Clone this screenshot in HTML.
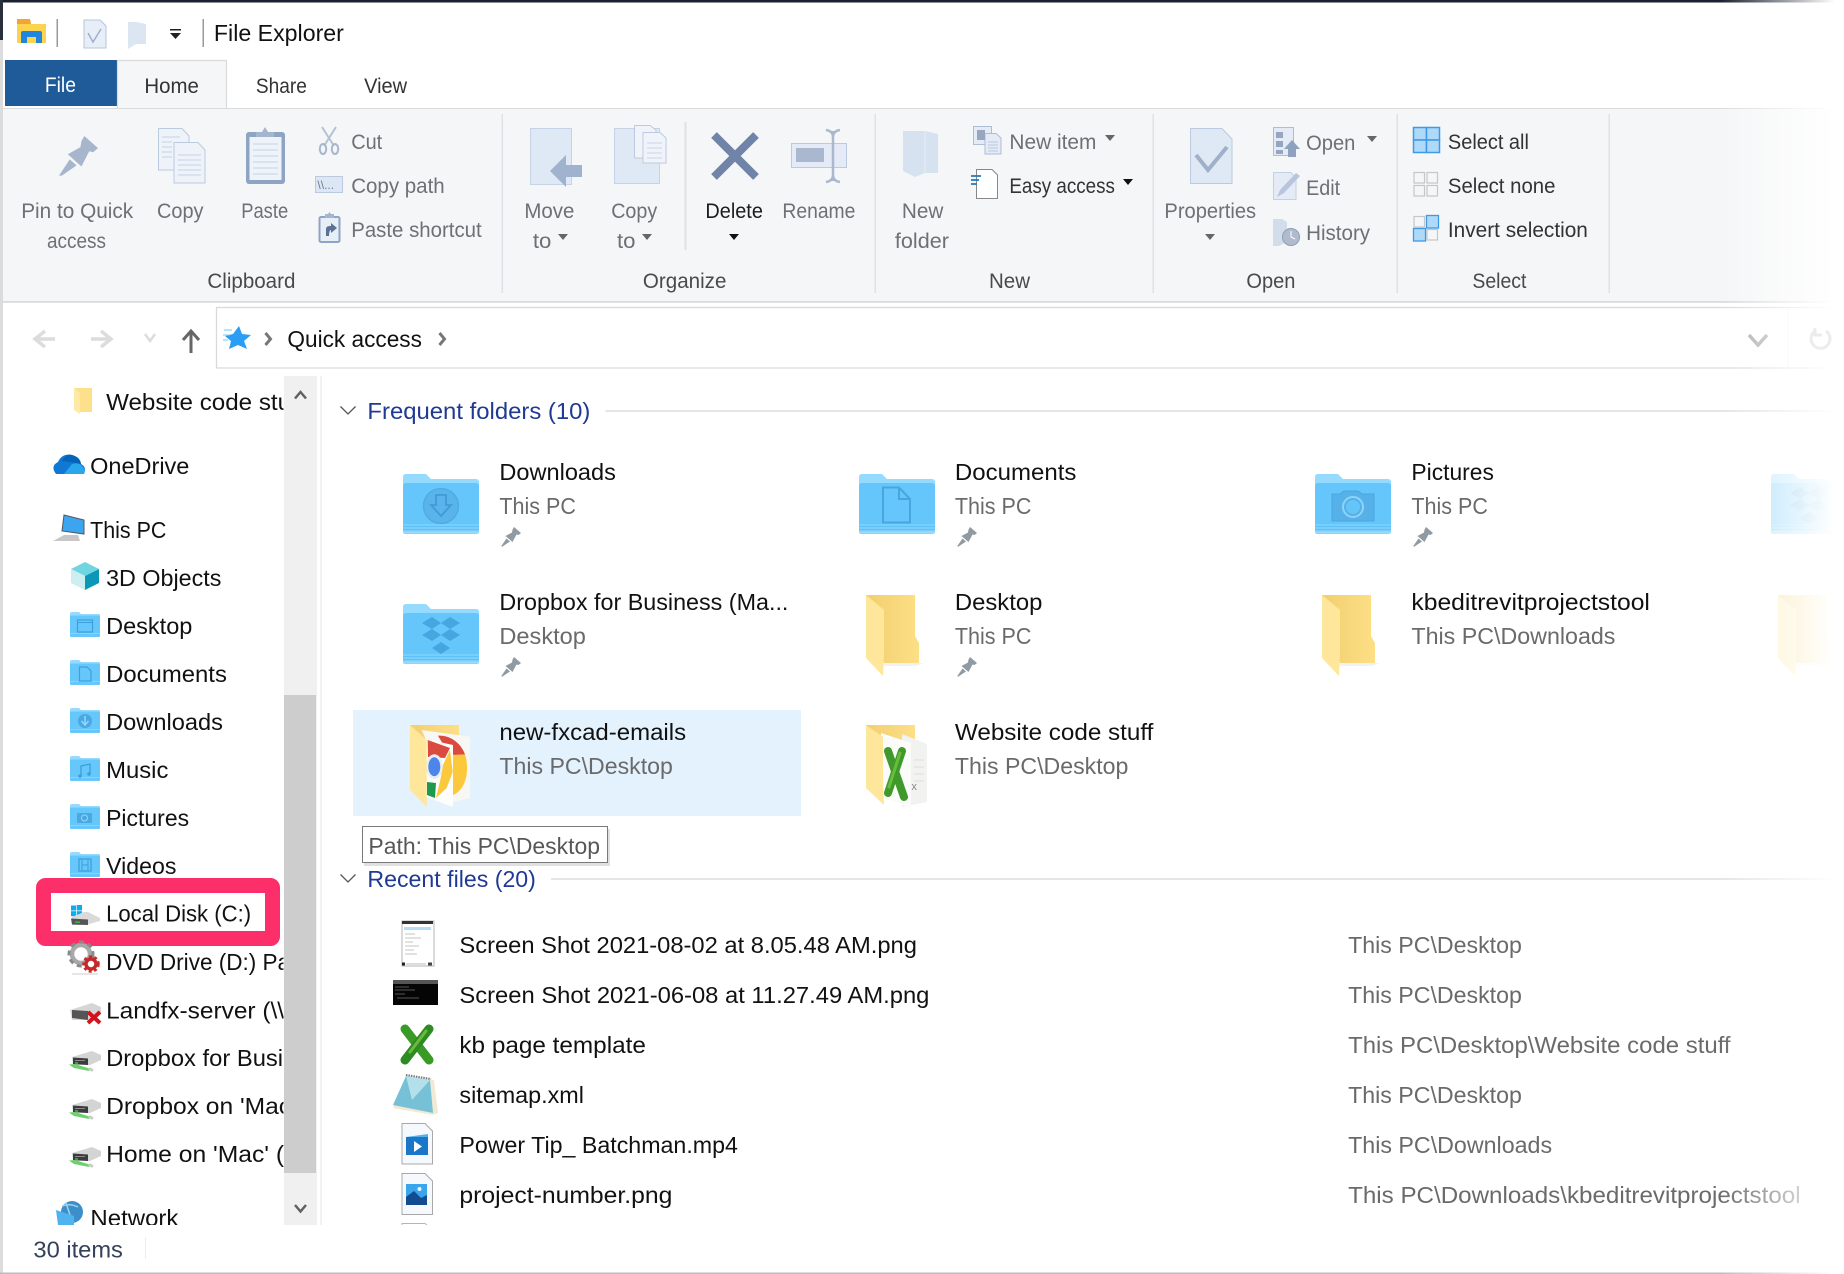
<!DOCTYPE html>
<html lang="en"><head><meta charset="utf-8"><title>File Explorer</title>
<style>
html,body{margin:0;padding:0;background:#fff;width:1844px;height:1274px;overflow:hidden}
svg{display:block;position:absolute;left:0;top:0}
text{font-family:"Liberation Sans",sans-serif;font-size:23.5px;fill:#111;transform:translateX(-.6px)}
.n text{transform:translate(-.6px,1px)}
.r{font-size:21px;fill:#6d7074}
.k{font-size:21px;fill:#1c1c1c}
.g{font-size:21px;fill:#4a4a4a}
.s{fill:#6a6a6a}
.h{fill:#1f3a93}
</style></head><body>
<svg width="1844" height="1274" viewBox="0 0 1844 1274" xmlns="http://www.w3.org/2000/svg">
<defs>
<linearGradient id="fade" x1="0" x2="1" y1="0" y2="0"><stop offset="0" stop-color="#fff" stop-opacity="0"/><stop offset="1" stop-color="#fff"/></linearGradient>
<linearGradient id="yb" x1="0" x2="1" y1="0" y2="0"><stop offset="0" stop-color="#f2cf70"/><stop offset="1" stop-color="#fddf86"/></linearGradient>
<clipPath id="nav"><rect x="0" y="376" width="283.5" height="849"/></clipPath>
<clipPath id="mainc"><rect x="330" y="376" width="1514" height="849"/></clipPath>
<g id="bf">
<path d="M3 0H23L28 5H73Q76 5 76 8V20H0V3Q0 0 3 0Z" fill="#95dbff"/>
<path d="M0 12Q0 9 3 9H73Q76 9 76 12V57Q76 60 73 60H3Q0 60 0 57Z" fill="#64c6fb"/>
<path d="M0 50H76V57Q76 60 73 60H3Q0 60 0 57Z" fill="#78cffc"/>
<path d="M0 52.500H76M0 55.500H76" stroke="#5fc0f5" stroke-width="1"/>
<path d="M0 58.500H76" stroke="#97dcfd" stroke-width="2"/>
</g>
<g id="yf">
<path d="M0 0H49V41L53 48V68H17Z" fill="url(#yb)"/>
<path d="M18 68H58L50 71H18Z" fill="#e9e9e9" opacity=".6"/>
<path d="M0 0L18 15V58L17 81L0 63Z" fill="#fee69a"/>
</g>
<g id="nf">
<path d="M1 0H9L11 2H29Q30 2 30 3V10H0V1Z" fill="#95dbff"/>
<path d="M0 4Q0 3.500 1 3.500H29Q30 3.500 30 4.500V24Q30 25 29 25H1Q0 25 0 24Z" fill="#66c7fb"/>
<path d="M0 21.500H30" stroke="#85d4fc" stroke-width="1"/>
</g>
<path id="pin" d="M13 0L20 6L17.500 8L15.500 7.500L11.500 15L4.500 9L11 5.500L11.500 2.500ZM5.500 11.500L9 14.500L1.500 19.500L0 19.500Z"/>
<g id="dn">
<path d="M3 6L23 0L32 4V9L21 14H4Z" fill="#d4d4d4"/>
<path d="M4 6.500L19 7.500V14L4 13Z" fill="#3c3c3c"/>
<path d="M6 9.500H16" stroke="#8a8a8a"/>
<path d="M6 12H9" stroke="#43b649" stroke-width="1.500"/>
<path d="M0 13.500L6 13L22 18L20 20L5 17Z" fill="#6fcf6f"/>
<path d="M20 17.500l4 2" stroke="#ccc" stroke-width="3"/>
</g>
</defs>

<rect width="1844" height="1274" fill="#fff"/>
<rect width="1844" height="2.500" fill="#1b2030"/>
<rect x="0" y="0" width="3" height="40" fill="#2a2f3c"/>
<rect x="0" y="40" width="3" height="1234" fill="#dcdcdc"/>

<!-- quick access bar -->
<path d="M17 19H30L31 24H46V43H17Z" fill="#fcd34f"/>
<path d="M17 19H30L31 24H17Z" fill="#efa632"/>
<path d="M21 43V33Q21 31 23 31H40Q42 31 42 33V43H36V37H27V43Z" fill="#1f86e0"/>
<rect x="56.500" y="19" width="1.500" height="28" fill="#9a9a9a"/>
<path d="M84 20H100L106 26V48H84Z" fill="#e8eef8" stroke="#b4c4dc" stroke-width="1"/>
<path d="M88 33L93 42L101 29" fill="none" stroke="#9fb0c9" stroke-width="1.500"/>
<path d="M128 22L136 22L146 24V44H136L128 49Z" fill="#dce6f3"/>
<rect x="170" y="29" width="11" height="1.500" fill="#222"/>
<path d="M170 33H181L175.500 39Z" fill="#222"/>
<rect x="202.500" y="19" width="1.500" height="28" fill="#9a9a9a"/>
<text x="214.500" y="41" textLength="130" lengthAdjust="spacingAndGlyphs">File Explorer</text>

<!-- tabs -->
<rect x="5" y="60" width="112" height="46" fill="#1f5b99"/>
<text x="45.500" y="92" class="k" style="fill:#fff" textLength="31" lengthAdjust="spacingAndGlyphs">File</text>
<rect x="0" y="108" width="1844" height="1.500" fill="#dadbdc"/>
<path d="M117.500 108V60.500H226.500V108" fill="#f5f6f7" stroke="#dadbdc" stroke-width="1.200"/>
<text x="145" y="93" class="k" style="fill:#333" textLength="54.500" lengthAdjust="spacingAndGlyphs">Home</text>
<text x="256.500" y="93" class="k" style="fill:#333" textLength="51" lengthAdjust="spacingAndGlyphs">Share</text>
<text x="364.700" y="93" class="k" style="fill:#333" textLength="43" lengthAdjust="spacingAndGlyphs">View</text>

<!-- ribbon -->
<rect x="3" y="109" width="1841" height="192" fill="#f5f6f7"/>
<rect x="3" y="301" width="1841" height="1.800" fill="#dadbdc"/>
<g fill="#dfe1e4">
<rect x="501.500" y="114" width="1.500" height="179"/><rect x="874.500" y="114" width="1.500" height="179"/>
<rect x="1152.500" y="114" width="1.500" height="179"/><rect x="1396.500" y="114" width="1.500" height="179"/>
<rect x="1608.500" y="114" width="1.500" height="179"/><rect x="684.500" y="122" width="2" height="128"/>
</g>

<!-- Ribbon icons -->
<use href="#pin" transform="translate(59 136) scale(1.950 2.030)" fill="#a8b6cd"/>
<g fill="#eef2f9" stroke="#bccadf">
<path d="M158.500 128.500H182L189 136V170H158.500Z"/>
<path d="M174 142.500H198L205 150V183H174Z"/>
</g>
<path d="M162 137H180M162 142H172M162 147H172M162 152H172M162 157H172M178 155H201M178 160H201M178 165H201M178 170H201M178 175H201" stroke="#c6d3e6" stroke-width="1"/>
<rect x="246" y="132" width="39" height="52" rx="3" fill="#8ea4c3"/>
<rect x="249.500" y="137" width="32" height="43" fill="#eef2f9"/>
<path d="M253 144H278M253 150H278M253 156H278M253 162H278M253 168H278M253 174H278" stroke="#c6d3e6"/>
<path d="M256 137V132H262L265 127L268 132H274V137Z" fill="#a4b6cf"/>
<path d="M322 127L334 146M336 127L324 146" stroke="#b5c2d6" stroke-width="2" fill="none"/>
<ellipse cx="323" cy="149" rx="3.200" ry="5" fill="none" stroke="#a7b6cd" stroke-width="2"/>
<ellipse cx="335" cy="149" rx="3.200" ry="5" fill="none" stroke="#a7b6cd" stroke-width="2"/>
<rect x="315.500" y="176.500" width="27" height="16" fill="#dce6f4" stroke="#bccadf"/>
<text x="318" y="189" style="font-size:12px;fill:#6e7f99">\\...</text>
<rect x="319.500" y="217" width="20" height="25" rx="1.500" fill="#e8eef7" stroke="#8ea4c3" stroke-width="2"/>
<path d="M325 218V214H328L329.500 212L331 214H334V218Z" fill="#a4b6cf"/>
<path d="M326 236V229Q326 226 330 226H331V223L337 228L331 233V230Q329 230 329 236Z" fill="#5a7194"/>

<rect x="530.500" y="128.500" width="41" height="56" fill="#dfe8f5" stroke="#c5d3e6"/>
<path d="M550 171L566 155V165H582V177H566V187Z" fill="#9fb2ce"/>
<rect x="614.500" y="128.500" width="45" height="55" fill="#dfe8f5" stroke="#c5d3e6"/>
<g fill="#f0f4fa" stroke="#bccadf"><path d="M634.500 125.500H650L656 130V158H634.500Z"/><path d="M643 132.500H660L666 138V163H643Z"/></g>
<path d="M647 143H662M647 148H662M647 153H662M647 158H662" stroke="#c6d3e6"/>

<path d="M714 135L756 177M756 135L714 177" stroke="#6f84a8" stroke-width="8"/>
<rect x="791.500" y="143.500" width="55" height="24" fill="#e4ebf6" stroke="#bccadf"/>
<rect x="796" y="148" width="28" height="14" fill="#a9b8cf"/>
<path d="M833 131V181M826 130Q833 131 833 137Q833 131 840 130M826 182Q833 181 833 175Q833 181 840 182" fill="none" stroke="#a9b8cf" stroke-width="2.500"/>

<path d="M903 131L925 131L938 134V173H925L915 177L903 171Z" fill="#d7e2f1"/>
<path d="M925 131V173" stroke="#e4ecf6"/>
<g fill="#e4ebf6" stroke="#adbdd6"><rect x="973.500" y="126.500" width="18" height="18"/><path d="M985 133.500H996L1001 138V154H985Z"/></g>
<rect x="977" y="130" width="8" height="10" fill="#97a7c0"/>
<path d="M988 142H998M988 145H998M988 148H998M988 151H998" stroke="#b9c8e0"/>
<path d="M976.500 169.500H992L997.500 175V198.500H976.500Z" fill="#fff" stroke="#888"/>
<path d="M971 176H981M971 180H979M971 184H977" stroke="#2a76b4" stroke-width="1.800"/>

<path d="M1190.500 128.500H1222L1232 139V183.500H1190.500Z" fill="#dfe8f5" stroke="#bccadf"/>
<path d="M1196 155L1208 170L1227 147" fill="none" stroke="#9fb0c9" stroke-width="4"/>
<rect x="1273.500" y="127.500" width="20" height="28" fill="#e4ebf6" stroke="#adbdd6"/>
<path d="M1276 132h7v6h-7zM1276 141h7v6h-7zM1276 150h7v4h-7z" fill="#95a6c0"/>
<path d="M1292 140L1300 149H1296V157H1288V149H1284Z" fill="#8ea2bf"/>
<path d="M1273.500 172.500H1291L1296 178V199.500H1273.500Z" fill="#e4ebf6" stroke="#c3d0e3"/>
<path d="M1277 197L1280 190L1296 173L1300 176L1284 193Z" fill="#b7c6dc"/>
<path d="M1273 219H1282L1287 222V242L1279 246H1273Z" fill="#d2ddec"/>
<circle cx="1291" cy="237" r="8.500" fill="#b0bccd" stroke="#8e9db3"/>
<path d="M1291 231V237L1295 239" stroke="#fff" fill="none"/>

<g fill="#aed9f9" stroke="#3d9ae8" stroke-width="1.500">
<rect x="1413.500" y="127.500" width="13" height="12.500"/><rect x="1426.500" y="127.500" width="13" height="12.500"/>
<rect x="1413.500" y="140" width="13" height="12.500"/><rect x="1426.500" y="140" width="13" height="12.500"/>
</g>
<g fill="#f5f6f7" stroke="#c6c6c6" stroke-width="1.200">
<rect x="1414" y="172.500" width="10.500" height="10.500"/><rect x="1427" y="172.500" width="10.500" height="10.500"/>
<rect x="1414" y="185.500" width="10.500" height="10.500"/><rect x="1427" y="185.500" width="10.500" height="10.500"/>
<rect x="1414" y="216.500" width="10.500" height="10.500"/><rect x="1427" y="229.500" width="10.500" height="10.500"/>
</g>
<g fill="#aed9f9" stroke="#3d9ae8" stroke-width="1.300">
<rect x="1426.500" y="215.500" width="12" height="12.500"/><rect x="1413.500" y="228.500" width="12" height="12.500"/>
</g>

<!-- Ribbon text -->
<text x="21.800" y="218" class="r" textLength="112" lengthAdjust="spacingAndGlyphs">Pin to Quick</text>
<text x="47.600" y="248" class="r" textLength="59" lengthAdjust="spacingAndGlyphs">access</text>
<text x="157.600" y="218" class="r" textLength="46.500" lengthAdjust="spacingAndGlyphs">Copy</text>
<text x="241.800" y="218" class="r" textLength="47" lengthAdjust="spacingAndGlyphs">Paste</text>
<text x="351.800" y="149" class="r" textLength="31" lengthAdjust="spacingAndGlyphs">Cut</text>
<text x="351.800" y="193" class="r" textLength="93.500" lengthAdjust="spacingAndGlyphs">Copy path</text>
<text x="351.800" y="237" class="r" textLength="130.500" lengthAdjust="spacingAndGlyphs">Paste shortcut</text>
<text x="208" y="288" class="g" textLength="88" lengthAdjust="spacingAndGlyphs">Clipboard</text>
<text x="525" y="218" class="r" textLength="50" lengthAdjust="spacingAndGlyphs">Move</text>
<text x="533.500" y="248" class="r" textLength="18.500" lengthAdjust="spacingAndGlyphs">to</text>
<path d="M558 234H568L563 240Z" fill="#666"/>
<text x="611.800" y="218" class="r" textLength="46" lengthAdjust="spacingAndGlyphs">Copy</text>
<text x="617.600" y="248" class="r" textLength="18.500" lengthAdjust="spacingAndGlyphs">to</text>
<path d="M642 234H652L647 240Z" fill="#666"/>
<text x="706" y="218" class="k" textLength="57.500" lengthAdjust="spacingAndGlyphs">Delete</text>
<path d="M729 234H739L734 240Z" fill="#111"/>
<text x="783" y="218" class="r" textLength="73" lengthAdjust="spacingAndGlyphs">Rename</text>
<text x="902.500" y="218" class="r" textLength="41.500" lengthAdjust="spacingAndGlyphs">New</text>
<text x="895.500" y="248" class="r" textLength="54" lengthAdjust="spacingAndGlyphs">folder</text>
<text x="643.500" y="288" class="g" textLength="83.500" lengthAdjust="spacingAndGlyphs">Organize</text>
<text x="1010" y="149" class="r" textLength="87" lengthAdjust="spacingAndGlyphs">New item</text>
<path d="M1105 135H1115L1110 141Z" fill="#666"/>
<text x="1010" y="193" class="k" style="fill:#333" textLength="105.500" lengthAdjust="spacingAndGlyphs">Easy access</text>
<path d="M1123 179H1133L1128 185Z" fill="#111"/>
<text x="989.600" y="288" class="g" textLength="41" lengthAdjust="spacingAndGlyphs">New</text>
<text x="1165" y="218" class="r" textLength="91.700" lengthAdjust="spacingAndGlyphs">Properties</text>
<path d="M1205 234H1215L1210 240Z" fill="#666"/>
<text x="1306.700" y="150" class="r" textLength="49.300" lengthAdjust="spacingAndGlyphs">Open</text>
<path d="M1367 136H1377L1372 142Z" fill="#666"/>
<text x="1306.700" y="195" class="r" textLength="34" lengthAdjust="spacingAndGlyphs">Edit</text>
<text x="1306.700" y="240" class="r" textLength="64" lengthAdjust="spacingAndGlyphs">History</text>
<text x="1247" y="288" class="g" textLength="49" lengthAdjust="spacingAndGlyphs">Open</text>
<text x="1448.500" y="149" class="k" style="fill:#333" textLength="81" lengthAdjust="spacingAndGlyphs">Select all</text>
<text x="1448.500" y="193" class="k" style="fill:#333" textLength="107.500" lengthAdjust="spacingAndGlyphs">Select none</text>
<text x="1448.500" y="237" class="k" style="fill:#333" textLength="140" lengthAdjust="spacingAndGlyphs">Invert selection</text>
<text x="1473" y="288" class="g" textLength="54" lengthAdjust="spacingAndGlyphs">Select</text>

<!-- address -->
<path d="M1844 307.500H216.500V368H1844" fill="#fff" stroke="#d9d9d9" stroke-width="1.300"/>
<rect x="1787.500" y="308" width="1" height="60" fill="#eee"/>
<path d="M45 331L35 339L45 347M35 339H55" fill="none" stroke="#dcdcdc" stroke-width="3.500"/>
<path d="M101 331L111 339L101 347M91 339H111" fill="none" stroke="#dcdcdc" stroke-width="3.500"/>
<path d="M145 334L150 341L155 334" fill="none" stroke="#dcdcdc" stroke-width="2.500"/>
<path d="M191 353V333M183 340L191 331L199 340" fill="none" stroke="#666" stroke-width="3"/>
<path d="M239 326L242 334L251 335L244 341L247 349L238 345L229 349L231 341L225 336L233 334Z" fill="#2a9df4"/>
<path d="M224 330h8M223 335h6M223 340h5" stroke="#8fd0fb" stroke-width="1.200"/>
<path d="M265.500 333L270.500 339L265.500 345" fill="none" stroke="#777" stroke-width="3"/>
<path d="M439.500 333L444.500 339L439.500 345" fill="none" stroke="#777" stroke-width="3"/>
<text x="288" y="347" textLength="134.500" lengthAdjust="spacingAndGlyphs">Quick access</text>
<path d="M1749 335L1758 345L1767 335" fill="none" stroke="#aaa" stroke-width="3.500"/>

<!-- NAV -->
<rect x="284" y="376" width="33" height="849" fill="#f0f0f0"/>
<rect x="284" y="695" width="32" height="478" fill="#cdcdcd"/>
<path d="M295 398.500L300.500 392L306 398.500" fill="none" stroke="#606060" stroke-width="2.500"/>
<path d="M295 1205L300.500 1211.500L306 1205" fill="none" stroke="#606060" stroke-width="2.500"/>
<rect x="320" y="376" width="2" height="849" fill="#f2f2f2"/>

<g clip-path="url(#nav)" class="n">
<path d="M74 388H92V412H80V414L74 410Z" fill="#fde18a"/><path d="M74 388L80 393V414L74 410Z" fill="#feeaa6"/>
<text x="106.700" y="409" textLength="198" lengthAdjust="spacingAndGlyphs">Website code stuff</text>
<path d="M56 474Q50 466 58 462Q62 453 72 455Q80 457 81 464Q87 467 84 474Z" fill="#0f78d4"/>
<path d="M62 461Q66 453 72 455Q80 457 81 464L70 462Z" fill="#0364b8"/>
<path d="M64 474L72 464Q80 461 85 470L84 474Z" fill="#28a8ea"/>
<text x="90.700" y="473" textLength="99.300" lengthAdjust="spacingAndGlyphs">OneDrive</text>
<path d="M64 515L84 520V534L62 531Z" fill="#3ba6ef" stroke="#556" stroke-width="1"/>
<path d="M53 541L64 535H78L80 541Z" fill="#c7c7c7"/>
<text x="90.700" y="537" textLength="76.300" lengthAdjust="spacingAndGlyphs">This PC</text>
<path d="M85 562L99 569L85 576L71 569Z" fill="#6fd6e1"/>
<path d="M71 569L85 576V590L71 583Z" fill="#cdeef0"/>
<path d="M99 569L85 576V590L99 583Z" fill="#0a97b8"/>
<text x="106.700" y="585" textLength="115.300" lengthAdjust="spacingAndGlyphs">3D Objects</text>

<use href="#nf" x="70" y="612"/>
<rect x="77.500" y="620" width="15" height="12" fill="none" stroke="#3d9fdc" stroke-width="1.200"/><path d="M77.500 622.500H92.500" stroke="#3d9fdc"/>
<text x="106.700" y="633" textLength="86.300" lengthAdjust="spacingAndGlyphs">Desktop</text>
<use href="#nf" x="70" y="660"/>
<path d="M79.500 667H87L91 671V681H79.500Z" fill="none" stroke="#3d9fdc" stroke-width="1.200"/>
<text x="106.700" y="681" textLength="120.800" lengthAdjust="spacingAndGlyphs">Documents</text>
<use href="#nf" x="70" y="708"/>
<circle cx="85" cy="721" r="7" fill="#4aa9e2"/><path d="M85 716V724M81.500 721L85 725L88.500 721" stroke="#95d7fb" stroke-width="1.500" fill="none"/>
<text x="106.700" y="729" textLength="116.800" lengthAdjust="spacingAndGlyphs">Downloads</text>
<use href="#nf" x="70" y="756"/>
<path d="M81 776V766L90 764V774" fill="none" stroke="#3d9fdc" stroke-width="1.300"/><circle cx="80" cy="776" r="1.800" fill="#3d9fdc"/><circle cx="89" cy="774" r="1.800" fill="#3d9fdc"/>
<text x="106.700" y="777" textLength="62.300" lengthAdjust="spacingAndGlyphs">Music</text>
<use href="#nf" x="70" y="804"/>
<rect x="77" y="813" width="15" height="10" rx="1" fill="#4aa9e2"/><circle cx="84.500" cy="818" r="3" fill="none" stroke="#95d7fb"/>
<text x="106.700" y="825" textLength="83" lengthAdjust="spacingAndGlyphs">Pictures</text>
<use href="#nf" x="70" y="852"/>
<rect x="79" y="859" width="12" height="12" fill="none" stroke="#3d9fdc" stroke-width="1.300"/><path d="M82 859V871M88 859V871M82 865H88" stroke="#3d9fdc"/>
<text x="106.700" y="873" textLength="70.300" lengthAdjust="spacingAndGlyphs">Videos</text>
</g>

<!-- pink -->
<rect x="43.500" y="885.500" width="229" height="53" rx="2" fill="#fff" stroke="#fd2f6b" stroke-width="15"/>
<g fill="#08aef0"><rect x="71" y="905.500" width="5" height="5"/><rect x="76.700" y="905" width="5.300" height="5.500"/><rect x="71" y="911.200" width="5" height="5"/><rect x="76.700" y="911.200" width="5.300" height="5.500"/></g>
<path d="M72 917L84 912H88L100 918V921L86 925H72Z" fill="#dadada"/>
<path d="M71 918.500L88 919.500V925L72 924.500Z" fill="#555"/>
<rect x="75" y="921.500" width="5" height="1.500" fill="#42b34a"/>
<text x="106.700" y="921.300" textLength="145" lengthAdjust="spacingAndGlyphs">Local Disk (C:)</text>

<g clip-path="url(#nav)" class="n">
<circle cx="81" cy="954" r="9" fill="#fff" stroke="#a8a8a8" stroke-width="4.500"/>
<circle cx="81" cy="954" r="12" fill="none" stroke="#8a8a8a" stroke-width="3" stroke-dasharray="5 4"/>
<circle cx="91" cy="964" r="5" fill="#fff" stroke="#c52a2a" stroke-width="3.500"/>
<circle cx="91" cy="964" r="7.500" fill="none" stroke="#c52a2a" stroke-width="2.500" stroke-dasharray="3 2.500"/>
<path d="M72 974H98" stroke="#ddd" stroke-width="1.500"/>
<text x="106.700" y="969" textLength="184" lengthAdjust="spacingAndGlyphs">DVD Drive (D:) Pa</text>
<path d="M70 1010L92 1003L101 1007V1012L88 1020H72Z" fill="#d6d6d6"/>
<path d="M72 1010L88 1011V1020L72 1018Z" fill="#555"/>
<path d="M88 1012L100 1023M100 1012L88 1023" stroke="#d4121e" stroke-width="4"/>
<text x="106.700" y="1017.500" textLength="178" lengthAdjust="spacingAndGlyphs">Landfx-server (\\</text>
<use href="#dn" transform="translate(69 1051)"/>
<text x="106.700" y="1065" textLength="177" lengthAdjust="spacingAndGlyphs">Dropbox for Busi</text>
<use href="#dn" transform="translate(69 1099)"/>
<text x="106.700" y="1113" textLength="185" lengthAdjust="spacingAndGlyphs">Dropbox on 'Mac</text>
<use href="#dn" transform="translate(69 1147)"/>
<text x="106.700" y="1161" textLength="178" lengthAdjust="spacingAndGlyphs">Home on 'Mac' (</text>
<circle cx="72" cy="1212" r="11" fill="#3d8fc9"/>
<path d="M62 1206Q70 1203 78 1207M66 1203L70 1215" stroke="#9fd3f0" stroke-width="1.500" fill="none"/>
<path d="M56 1210L74 1216V1225H58Z" fill="#4fb3ef"/>
<text x="91" y="1225" textLength="88" lengthAdjust="spacingAndGlyphs">Network</text>
</g>

<text x="34" y="1257.500" style="fill:#35405a" textLength="89.500" lengthAdjust="spacingAndGlyphs">30 items</text>
<rect x="145" y="1237" width="1" height="22" fill="#eee"/>
<rect x="0" y="1272.500" width="1844" height="1.500" fill="#bdbdbd"/>

<!-- Main -->
<path d="M340.500 406.500L348 414L355.500 406.500" fill="none" stroke="#555" stroke-width="1.300"/>
<text x="368" y="419" class="h" textLength="223" lengthAdjust="spacingAndGlyphs">Frequent folders (10)</text>
<rect x="605.500" y="410" width="1238.500" height="2" fill="#e5e5e5"/>

<!-- Highlight -->
<rect x="353" y="710" width="448" height="106" fill="#e4f2fe"/>

<!-- col 1 -->
<use href="#bf" x="403" y="474"/>
<circle cx="441" cy="506" r="17.500" fill="#58b4ea" stroke="#4faae2" stroke-width="1.300"/>
<path d="M436 495H446V505H451L441 516L431 505H436Z" fill="none" stroke="#4399d4" stroke-width="1.800"/>
<text x="500" y="480" textLength="116.500" lengthAdjust="spacingAndGlyphs">Downloads</text>
<text x="500" y="514" class="s" textLength="76.500" lengthAdjust="spacingAndGlyphs">This PC</text>
<use href="#pin" x="501" y="527" fill="#8f9aa3"/>

<use href="#bf" x="403" y="604"/>
<g fill="#45a6e0"><path d="M432 617L441 623L432 629L422 623Z"/><path d="M450 617L460 623L450 629L441 623Z"/><path d="M432 629L441 635L432 641L422 635Z"/><path d="M450 629L460 635L450 641L441 635Z"/><path d="M441 642L450 648L441 654L432 648Z"/></g>
<text x="500" y="610" textLength="289" lengthAdjust="spacingAndGlyphs">Dropbox for Business (Ma...</text>
<text x="500" y="644" class="s" textLength="86.500" lengthAdjust="spacingAndGlyphs">Desktop</text>
<use href="#pin" x="501" y="657" fill="#8f9aa3"/>

<!-- chrome folder -->
<g transform="translate(410 725)">
<path d="M0 0H49V66H20Z" fill="url(#yb)"/>
<path d="M11.700 5L60 11.700V73L43 77Z" fill="#f7f7f4"/>
<path d="M28 10.700C38 10 50 16 55 29.500L44 30L36 24Z" fill="#db4a3e"/>
<path d="M55 29.500C60 45 56 65 43 70V30Z" fill="#fdc93c"/>
<path d="M16 14L43 20V82L16 72Z" fill="#fdfdfb"/>
<path d="M17.700 15L40 23L35 33L18 32Z" fill="#db4a3e"/>
<path d="M40 25L42.700 47L36.700 63L26 73L30.700 53L33 40Z" fill="#fdc93c"/>
<path d="M17 57L26 58L25 73L17 70Z" fill="#1e9a4e"/>
<ellipse cx="24.300" cy="41.700" rx="8.300" ry="12.500" fill="#eceff1"/>
<ellipse cx="24.300" cy="41.700" rx="6" ry="9.500" fill="#4d86ea"/>
<path d="M0 0L16.700 15V81.700L0 65Z" fill="#fee69a"/>
</g>
<text x="500" y="740" textLength="186.700" lengthAdjust="spacingAndGlyphs">new-fxcad-emails</text>
<text x="500" y="774" class="s" textLength="173.500" lengthAdjust="spacingAndGlyphs">This PC\Desktop</text>

<!-- col 2 -->
<use href="#bf" x="859" y="474"/>
<path d="M883 487.500H899L910 499V522.500H883ZM899 487.500V499H910" fill="none" stroke="#47a6df" stroke-width="2"/>
<text x="955.500" y="480" textLength="121.500" lengthAdjust="spacingAndGlyphs">Documents</text>
<text x="955.500" y="514" class="s" textLength="76.500" lengthAdjust="spacingAndGlyphs">This PC</text>
<use href="#pin" x="957" y="527" fill="#8f9aa3"/>

<use href="#yf" x="866" y="595"/>
<text x="955.500" y="610" textLength="87.500" lengthAdjust="spacingAndGlyphs">Desktop</text>
<text x="955.500" y="644" class="s" textLength="76.500" lengthAdjust="spacingAndGlyphs">This PC</text>
<use href="#pin" x="957" y="657" fill="#8f9aa3"/>

<!-- excel folder -->
<g transform="translate(866 725)">
<path d="M0 0H49V66H20Z" fill="url(#yb)"/>
<path d="M36 9L61 19V77L36 82Z" fill="#f2f2f0"/>
<path d="M15 8L45 18V83L15 72Z" fill="#fbfbf9"/>
<path d="M48 35H58M48 42H58M48 49H58M48 56H58" stroke="#ddd"/>
<text x="46" y="65" style="font-size:11px;fill:#888">x</text>
<path d="M22 26L38 72M36 26L22 68" stroke-linecap="round" stroke-width="8" fill="none" stroke="#3f9a2b"/>
<path d="M34 28L23 62" stroke="#69bd3c" stroke-width="3" stroke-linecap="round"/>
<path d="M0 0L17 12V58L18 80L0 63Z" fill="#fee69a"/>
</g>
<text x="955.500" y="740" textLength="198.500" lengthAdjust="spacingAndGlyphs">Website code stuff</text>
<text x="955.500" y="774" class="s" textLength="173.500" lengthAdjust="spacingAndGlyphs">This PC\Desktop</text>

<!-- col 3 -->
<use href="#bf" x="1315" y="474"/>
<path d="M1332 494H1340L1344 491H1358L1362 494H1374V521H1332Z" fill="#55b1e8" stroke="#4aa6e0"/>
<circle cx="1353" cy="507" r="10" fill="none" stroke="#8dd3fa" stroke-width="2"/>
<circle cx="1353" cy="507" r="7" fill="#65c4f8"/>
<text x="1412" y="480" textLength="82.500" lengthAdjust="spacingAndGlyphs">Pictures</text>
<text x="1412" y="514" class="s" textLength="76.500" lengthAdjust="spacingAndGlyphs">This PC</text>
<use href="#pin" x="1413" y="527" fill="#8f9aa3"/>

<use href="#yf" x="1322" y="595"/>
<text x="1412" y="610" textLength="238.500" lengthAdjust="spacingAndGlyphs">kbeditrevitprojectstool</text>
<text x="1412" y="644" class="s" textLength="204" lengthAdjust="spacingAndGlyphs">This PC\Downloads</text>

<!-- col 4 faded -->
<g opacity=".55">
<use href="#bf" x="1771" y="474"/>
<g fill="#45a6e0"><path d="M1800 487L1809 493L1800 499L1790 493Z"/><path d="M1818 487L1828 493L1818 499L1809 493Z"/><path d="M1800 499L1809 505L1800 511L1790 505Z"/><path d="M1818 499L1828 505L1818 511L1809 505Z"/><path d="M1809 512L1818 518L1809 524L1800 518Z"/></g>
<use href="#yf" x="1778" y="595"/>
</g>

<!-- tooltip -->
<rect x="364" y="829" width="246" height="37" fill="#000" opacity=".12"/>
<rect x="362.500" y="826.500" width="245" height="36" fill="#fff" stroke="#7a7a7a" stroke-width="1"/>
<text x="369" y="854" style="fill:#575757" textLength="231.600" lengthAdjust="spacingAndGlyphs">Path: This PC\Desktop</text>

<!-- recent -->
<path d="M340.500 874.500L348 882L355.500 874.500" fill="none" stroke="#555" stroke-width="1.300"/>
<text x="368" y="887" class="h" textLength="168.500" lengthAdjust="spacingAndGlyphs">Recent files (20)</text>
<rect x="551" y="878" width="1293" height="2" fill="#e5e5e5"/>

<g clip-path="url(#mainc)">
<!-- r1 -->
<rect x="402" y="921" width="32" height="45" fill="#fff" stroke="#b5b5b5"/>
<rect x="402" y="921" width="31" height="3" fill="#333"/>
<rect x="404" y="927" width="27" height="3" fill="#b9dcf5"/>
<path d="M405 934h10M405 938h16M405 942h8M405 946h14M405 950h9M405 954h12" stroke="#c3c3c3"/>
<rect x="402" y="962.500" width="3" height="3" fill="#222"/><rect x="428" y="962.500" width="4" height="3" fill="#444"/>
<rect x="406" y="963" width="20" height="2" fill="#ddd"/>
<!-- r2 -->
<rect x="393" y="984" width="45" height="21" fill="#050505"/>
<rect x="393" y="980" width="45" height="4" fill="#555"/>
<path d="M395 987h14M395 990h20M395 994h10M397 998h22" stroke="#555"/>
<text x="460" y="953" textLength="457.500" lengthAdjust="spacingAndGlyphs">Screen Shot 2021-08-02 at 8.05.48 AM.png</text>
<text x="460" y="1003" textLength="470" lengthAdjust="spacingAndGlyphs">Screen Shot 2021-06-08 at 11.27.49 AM.png</text>
<!-- r3 -->
<path d="M405 1029L429 1060" stroke="#3a9a26" stroke-width="9" stroke-linecap="round"/>
<path d="M429 1029L405 1060" stroke="#2e8a22" stroke-width="9" stroke-linecap="round"/>
<path d="M426 1031L410 1052" stroke="#6abb3b" stroke-width="3" stroke-linecap="round"/>
<text x="460" y="1053" textLength="186.500" lengthAdjust="spacingAndGlyphs">kb page template</text>
<!-- r4 -->
<path d="M406 1076L434 1080L438 1113L433 1115L393 1108Z" fill="#f1e9d3"/>
<path d="M406 1076L430 1080L433 1113L393 1105Z" fill="#77c1d6"/>
<path d="M406 1076L430 1080L412 1100Z" fill="#b3e0ea"/>
<path d="M406 1075L431 1079" stroke="#777" stroke-width="2" stroke-dasharray="1.500 1"/>
<text x="460" y="1103" textLength="124.500" lengthAdjust="spacingAndGlyphs">sitemap.xml</text>
<!-- r5 -->
<path d="M402 1123.500H425L432.500 1131V1164H402Z" fill="#f5f8fc" stroke="#a8a8a8"/>
<rect x="406" y="1137" width="22" height="18" fill="#1976c9"/>
<path d="M406 1137L428 1134V1137Z" fill="#52b3ea"/>
<path d="M414 1141V1152L422 1146.500Z" fill="#fff"/>
<text x="460" y="1153" textLength="278.500" lengthAdjust="spacingAndGlyphs">Power Tip_ Batchman.mp4</text>
<!-- r6 -->
<path d="M402 1173.500H425L432.500 1181V1214.500H402Z" fill="#f5f8fc" stroke="#a8a8a8"/>
<rect x="406" y="1184" width="21" height="21" fill="#39a5ea"/>
<path d="M406 1205V1197L414 1191L421 1198L427 1195V1205Z" fill="#124b8f"/>
<circle cx="419.500" cy="1189" r="2" fill="#e7f4fd"/>
<text x="460" y="1203" textLength="213" lengthAdjust="spacingAndGlyphs">project-number.png</text>
<path d="M402 1225V1223.500H425L427 1225" fill="none" stroke="#b5b5b5"/>

<g class="s">
<text class="s" x="1348.700" y="953" textLength="173.800" lengthAdjust="spacingAndGlyphs">This PC\Desktop</text>
<text class="s" x="1348.700" y="1003" textLength="173.800" lengthAdjust="spacingAndGlyphs">This PC\Desktop</text>
<text class="s" x="1348.700" y="1053" textLength="382.500" lengthAdjust="spacingAndGlyphs">This PC\Desktop\Website code stuff</text>
<text class="s" x="1348.700" y="1103" textLength="173.800" lengthAdjust="spacingAndGlyphs">This PC\Desktop</text>
<text class="s" x="1348.700" y="1153" textLength="204" lengthAdjust="spacingAndGlyphs">This PC\Downloads</text>
<text class="s" x="1348.700" y="1203" textLength="452.500" lengthAdjust="spacingAndGlyphs">This PC\Downloads\kbeditrevitprojectstool</text>
</g>
</g>

<!-- right fade -->
<rect x="1720" y="0" width="115" height="1274" fill="url(#fade)"/>
<rect x="1835" y="0" width="9" height="1274" fill="#fff"/>
<path d="M1815 331A9.500 9.500 0 1 0 1826 331M1815 328V335H1822" fill="none" stroke="#ececec" stroke-width="3"/>
</svg>
</body></html>
